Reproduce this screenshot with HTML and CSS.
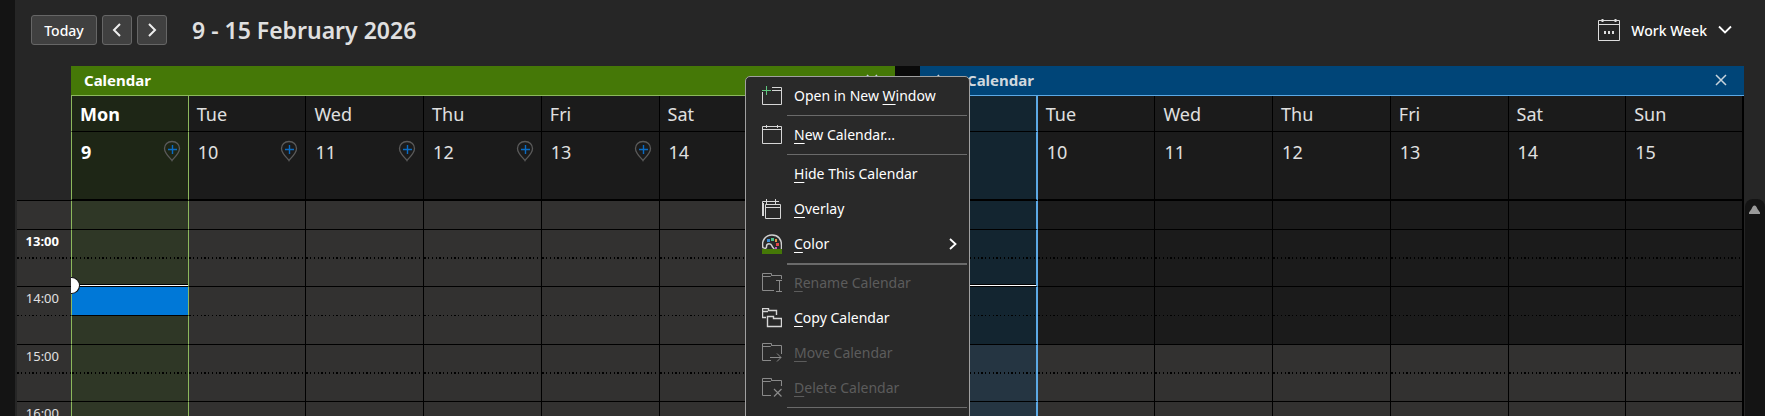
FILE: index.html
```html
<!DOCTYPE html>
<html lang="en">
<head>
  <meta charset="UTF-8">
  <meta name="viewport" content="width=device-width, initial-scale=1.0">
  <title>Calendar</title>
  <link rel="stylesheet" href="styles.css">
</head>
<body>
  <svg class="defs" aria-hidden="true">
    <symbol id="pin" viewBox="0 0 18 22">
      <path d="M9 20.5 C8 18.5 1.5 14 1.5 8.5 C1.5 4.5 4.5 1.5 9 1.5 S16.5 4.5 16.5 8.5 C16.5 14 10 18.5 9 20.5 Z" fill="none" stroke="#5a5a5a" stroke-width="1.3"/>
      <path d="M9.5 5 V14 M5 9.5 H14" fill="none" stroke="#0a6cc4" stroke-width="1.4"/>
    </symbol>
    <symbol id="folder" viewBox="0 0 20 20">
      <path d="M19.5 6 V2.5 H9.5 V0.5 H0.5 V17.5 H9 M0.5 3.5 H8.5 L9.5 2.5" fill="none" stroke="currentColor"/>
    </symbol>
  </svg>

  <div class="app">
    <header class="toolbar">
      <button class="btn btn-today" type="button">Today</button>
      <button class="btn btn-step" type="button" aria-label="Previous week">
        <svg width="10" height="14" viewBox="0 0 10 14"><path d="M8 1 L2 7 L8 13"/></svg>
      </button>
      <button class="btn btn-step" type="button" aria-label="Next week">
        <svg width="10" height="14" viewBox="0 0 10 14"><path d="M2 1 L8 7 L2 13"/></svg>
      </button>
      <h1 class="range">9 - 15 February 2026</h1>
      <button class="view-picker" type="button">
        <svg width="22" height="22" viewBox="0 0 22 22">
          <path d="M0.5 1.5 H21.5 V21.5 H0.5 Z M0.5 5.5 H21.5" fill="none" stroke="#ddd"/>
          <path d="M4.5 0 V3 M17.5 0 V3" stroke="#ddd" stroke-width="2"/>
          <path d="M6 13.5 H8 M10 13.5 H12 M14 13.5 H16" stroke="#ddd" stroke-width="3"/>
        </svg>
        <span>Work Week</span>
        <svg width="14" height="10" viewBox="0 0 14 10"><path d="M1 1.5 L7 7.5 L13 1.5" fill="none" stroke="#fff" stroke-width="1.8"/></svg>
      </button>
    </header>

    <main class="board">
      <table class="hours">
        <thead><tr><th></th></tr></thead>
        <tbody>
          <tr class="slot"><td></td></tr>
          <tr class="slot half"><td class="now-hour">13:00</td></tr>
          <tr class="slot short"><td></td></tr>
          <tr class="slot half thin"><td>14:00</td></tr>
          <tr class="slot"><td></td></tr>
          <tr class="slot half"><td>15:00</td></tr>
          <tr class="slot short"><td></td></tr>
          <tr class="slot half"><td>16:00</td></tr>
        </tbody>
      </table>

      <section class="calendar green">
        <div class="calendar-bar">
          <h2>Calendar</h2>
          <button class="close" type="button" aria-label="Close calendar">
            <svg width="12" height="12" viewBox="0 0 12 12"><path d="M1 1 L11 11 M11 1 L1 11"/></svg>
          </button>
        </div>
        <table class="week">
          <thead>
            <tr class="names"><th class="today">Mon</th><th>Tue</th><th>Wed</th><th>Thu</th><th>Fri</th><th>Sat</th><th></th></tr>
            <tr class="dates">
              <td class="today"><div class="date"><span>9</span><svg class="pin"><use href="#pin"/></svg></div></td>
              <td><div class="date"><span>10</span><svg class="pin"><use href="#pin"/></svg></div></td>
              <td><div class="date"><span>11</span><svg class="pin"><use href="#pin"/></svg></div></td>
              <td><div class="date"><span>12</span><svg class="pin"><use href="#pin"/></svg></div></td>
              <td><div class="date"><span>13</span><svg class="pin"><use href="#pin"/></svg></div></td>
              <td><div class="date"><span>14</span></div></td>
              <td></td>
            </tr>
          </thead>
          <tbody>
            <tr class="slot"><td class="today"></td><td></td><td></td><td></td><td></td><td></td><td></td></tr>
            <tr class="slot half"><td class="today"></td><td></td><td></td><td></td><td></td><td></td><td></td></tr>
            <tr class="slot short"><td class="today"><span class="now-line"></span><span class="now-dot"></span></td><td></td><td></td><td></td><td></td><td></td><td></td></tr>
            <tr class="slot half thin"><td class="today selected"></td><td></td><td></td><td></td><td></td><td></td><td></td></tr>
            <tr class="slot"><td class="today"></td><td></td><td></td><td></td><td></td><td></td><td></td></tr>
            <tr class="slot half"><td class="today"></td><td></td><td></td><td></td><td></td><td></td><td></td></tr>
            <tr class="slot short"><td class="today"></td><td></td><td></td><td></td><td></td><td></td><td></td></tr>
            <tr class="slot half"><td class="today"></td><td></td><td></td><td></td><td></td><td></td><td></td></tr>
          </tbody>
        </table>
      </section>

      <section class="calendar blue">
        <div class="calendar-bar">
          <button class="close" type="button" aria-label="View in overlay mode">
            <svg width="14" height="12" viewBox="0 0 14 12"><path d="M6 1 L1 6 L6 11 M1 6 H13"/></svg>
          </button>
          <h2>Calendar</h2>
          <button class="close" type="button" aria-label="Close calendar">
            <svg width="12" height="12" viewBox="0 0 12 12"><path d="M1 1 L11 11 M11 1 L1 11"/></svg>
          </button>
        </div>
        <table class="week">
          <thead>
            <tr class="names"><th class="today"></th><th>Tue</th><th>Wed</th><th>Thu</th><th>Fri</th><th>Sat</th><th>Sun</th></tr>
            <tr class="dates">
              <td class="today"></td>
              <td><div class="date"><span>10</span></div></td>
              <td><div class="date"><span>11</span></div></td>
              <td><div class="date"><span>12</span></div></td>
              <td><div class="date"><span>13</span></div></td>
              <td><div class="date"><span>14</span></div></td>
              <td><div class="date"><span>15</span></div></td>
            </tr>
          </thead>
          <tbody>
            <tr class="slot off"><td class="today"></td><td></td><td></td><td></td><td></td><td></td><td></td></tr>
            <tr class="slot half off"><td class="today"></td><td></td><td></td><td></td><td></td><td></td><td></td></tr>
            <tr class="slot short off"><td class="today"><span class="now-line"></span></td><td></td><td></td><td></td><td></td><td></td><td></td></tr>
            <tr class="slot half thin off"><td class="today"></td><td></td><td></td><td></td><td></td><td></td><td></td></tr>
            <tr class="slot off"><td class="today"></td><td></td><td></td><td></td><td></td><td></td><td></td></tr>
            <tr class="slot half"><td class="today"></td><td></td><td></td><td></td><td></td><td></td><td></td></tr>
            <tr class="slot short"><td class="today"></td><td></td><td></td><td></td><td></td><td></td><td></td></tr>
            <tr class="slot half"><td class="today"></td><td></td><td></td><td></td><td></td><td></td><td></td></tr>
          </tbody>
        </table>
      </section>

      <div class="scrollbar">
        <button type="button" aria-label="Scroll up">
          <svg width="11" height="10" viewBox="0 0 11 10"><path d="M5.5 0.5 C7 0.5 7.5 2 8.5 4 L11 7.5 V9 H0 V7.5 L2.5 4 C3.5 2 4 0.5 5.5 0.5 Z" fill="#9a9a9a"/></svg>
        </button>
      </div>
    </main>
  </div>

  <!-- Calendar context menu -->
  <div class="menu" role="menu">
    <button type="button" role="menuitem">
      <svg class="icon" viewBox="0 0 20 20">
        <path d="M0.5 6 V18.5 H19.5 V1.5 H10 M10 4.5 H19" fill="none" stroke="currentColor"/>
        <path d="M4.5 0 V9 M0 4.5 H9" fill="none" stroke="#5fc77e"/>
      </svg>
      <span>Open in New <u>W</u>indow</span>
    </button>
    <hr>
    <button type="button" role="menuitem">
      <svg class="icon" viewBox="0 0 20 20">
        <path d="M0.5 1.5 H19.5 V18.5 H0.5 Z M0.5 4.5 H19.5 M4.5 0 V3 M15.5 0 V3" fill="none" stroke="currentColor"/>
      </svg>
      <span><u>N</u>ew Calendar...</span>
    </button>
    <hr>
    <button type="button" role="menuitem"><span class="icon"></span><span><u>H</u>ide This Calendar</span></button>
    <button type="button" role="menuitem">
      <svg class="icon" viewBox="0 0 20 20">
        <path d="M0.5 17 V2.5 H17 M4.5 0 V5 M13.5 0 V5 M3.5 5.5 H18.5 V19.5 H3.5 Z M3.5 8.5 H18.5 M1.5 17 V4" fill="none" stroke="currentColor"/>
      </svg>
      <span><u>O</u>verlay</span>
    </button>
    <button type="button" role="menuitem">
      <svg class="icon" viewBox="0 0 20 20">
        <path d="M1 14 C-1 6 4 1 10 1 S20 5 19.5 13 V15 M1 13.5 C3 15 5 14.5 4.5 12 C5 9 9 9 10 12 C10.5 14 12 14 12 15" fill="none" stroke="#d0d0d0" stroke-width="1.5"/>
        <path d="M5 5 H8 V8 H5 Z" fill="#3a8fd8"/>
        <path d="M9 4 H12 V7 H9 Z" fill="#4cc08a"/>
        <path d="M13 5 H15 V8 H13 Z" fill="#e0954a"/>
        <path d="M14 9 H17 V12 H14 Z" fill="#e04848"/>
        <path d="M13 13 H15 V15 H13 Z" fill="#c05fc0"/>
        <path d="M0 15 H20 V20 H0 Z" fill="#457807"/>
      </svg>
      <span><u>C</u>olor</span>
      <svg class="submenu" width="8" height="12" viewBox="0 0 8 12"><path d="M1 1 L6.5 6 L1 11" fill="none" stroke="#fff" stroke-width="1.8"/></svg>
    </button>
    <hr class="thick">
    <button type="button" role="menuitem" disabled>
      <svg class="icon" viewBox="0 0 20 20">
        <use href="#folder"/>
        <path d="M14 7.5 H20 M17.5 7.5 V18.5 M14 18.5 H20 M9 17.5 H12" fill="none" stroke="currentColor"/>
      </svg>
      <span><u>R</u>ename Calendar</span>
    </button>
    <button type="button" role="menuitem">
      <svg class="icon" viewBox="0 0 20 20">
        <path d="M4 9.5 H0.5 V0.5 H6.5 V2.5 H14.5 V7 M0.5 3.5 H6 M5.5 18.5 V8.5 H11.5 V10.5 H19.5 V18.5 Z" fill="none" stroke="currentColor" stroke-width="1.4"/>
      </svg>
      <span><u>C</u>opy Calendar</span>
    </button>
    <button type="button" role="menuitem" disabled>
      <svg class="icon" viewBox="0 0 20 20">
        <use href="#folder"/>
        <path d="M8 14.5 H19 M15 10.5 L19 14.5 L15 18.5 M19.5 6 V11" fill="none" stroke="currentColor"/>
      </svg>
      <span><u>M</u>ove Calendar</span>
    </button>
    <button type="button" role="menuitem" disabled>
      <svg class="icon" viewBox="0 0 20 20">
        <use href="#folder"/>
        <path d="M12 11 L19.5 18.5 M19.5 11 L12 18.5 M19.5 6 V8" fill="none" stroke="currentColor" stroke-width="1.2"/>
      </svg>
      <span><u>D</u>elete Calendar</span>
    </button>
    <hr>
  </div>
</body>
</html>
```
FILE: styles.css
```css
:root {
  --bg: #262626;
  --edge: #141414;
  --cell: #1b1b1b;
  --work: #323130;
  --line: #000;
}

* {
  box-sizing: border-box;
}

body {
  margin: 0;
  height: 100vh;
  overflow: hidden;
  background: var(--bg);
  color: #e0e0e0;
  font-family: "Noto Sans", "Open Sans", sans-serif;
}

button {
  font: inherit;
  color: inherit;
  background: none;
  border: none;
  padding: 0;
}

.defs {
  display: none;
}

.app {
  height: 100vh;
  border-left: 15px solid var(--edge);
}

/* Toolbar */
.toolbar {
  display: flex;
  align-items: center;
  gap: 5px;
  height: 66px;
  padding: 0 33px 6px 16px;
}

.btn {
  height: 30px;
  background: #404040;
  border: 1px solid #666;
  border-radius: 3px;
  color: #fff;
  display: flex;
  align-items: center;
  justify-content: center;
}

.btn-today {
  width: 66px;
  font-size: 14px;
  font-weight: 500;
}

.btn-step {
  width: 30px;
}

.btn-step path {
  fill: none;
  stroke: #eee;
  stroke-width: 2;
}

.range {
  margin: 0 auto 0 20px;
  font-size: 23px;
  line-height: 30px;
  font-weight: 600;
}

.view-picker {
  display: flex;
  align-items: center;
  gap: 11px;
  font-size: 14px;
  font-weight: 500;
  color: #fff;
}

/* Two calendars side by side */
.board {
  display: grid;
  grid-template-columns: 56px 1fr 25px 1fr 21px;
}

.hours { grid-column: 1; }
.green { grid-column: 2; }
.blue { grid-column: 4; }
.scrollbar { grid-column: 5; }

.green {
  --bar: #457807;
  --accent: #8cb85c;
  --today-head: #1e2616;
  --today-work: #2f3726;
  --today-off: #1e2616;
  --accent-width: 1px;
  box-shadow: 25px 0 0 #0a0a0a;
}

.blue {
  --bar: #004578;
  --accent: #5ca9e5;
  --today-head: #132530;
  --today-work: #253542;
  --today-off: #132530;
  --accent-width: 2px;
}

.calendar-bar {
  display: flex;
  align-items: center;
  gap: 20px;
  height: 30px;
  padding: 0 17px 2px 13px;
  background: var(--bar);
  border-bottom: 1px solid var(--accent);
}

.calendar-bar h2 {
  margin: 0 auto 0 0;
  font-size: 15px;
  line-height: 20px;
  font-weight: 700;
  color: #fff;
}

.blue .calendar-bar h2 {
  color: #d0d8de;
}

.close {
  display: flex;
}

.close path {
  fill: none;
  stroke: #c8d4dc;
  stroke-width: 1.5;
}

table {
  width: 100%;
  table-layout: fixed;
  border-collapse: separate;
  border-spacing: 0;
}

th,
td {
  padding: 0;
  text-align: left;
  font-weight: 400;
}

.week th,
.week td {
  background-color: var(--cell);
  border-right: 1px solid var(--line);
  border-bottom: 1px solid var(--line);
}

.names th {
  height: 36px;
  padding-left: 8px;
  font-size: 18px;
  line-height: 24px;
}

.names .today {
  width: calc(100% / 7 + 1px);
}

.week .dates td {
  height: 69px;
  padding: 8px 7px 0 9px;
  vertical-align: top;
  border-bottom-width: 2px;
  font-size: 18px;
  line-height: 24px;
}

.date {
  display: flex;
  justify-content: space-between;
}

.pin {
  width: 18px;
  height: 22px;
}

.names .today,
.dates .today {
  font-weight: 700;
  color: #fff;
}

.week .today {
  position: relative;
  background-color: var(--today-head);
  border-left: 1px solid var(--accent);
  border-right: var(--accent-width) solid var(--accent);
}

.week tr > :last-child {
  border-right-width: 2px;
}

/* Half-hour slots */
.slot td {
  height: 29px;
  border-bottom: 1px solid var(--line);
  background-color: var(--work);
}

.week .slot td {
  background-color: var(--work);
}

.week .slot .today {
  background-color: var(--today-work);
}

.week .off td {
  background-color: var(--cell);
}

.week .off .today {
  background-color: var(--today-off);
}

.slot.short td {
  height: 28px;
}

.slot.half td,
.week .slot.half td {
  border-bottom: none;
  background-image: repeating-linear-gradient(90deg, #000 0 2px, transparent 2px 4px, #000 4px 5px, transparent 5px 8px, #000 8px 9px, transparent 9px 12px, #000 12px 13px, transparent 13px 15px);
  background-size: 100% 2px;
  background-position: 0 100%;
  background-repeat: no-repeat;
}

.slot.half.thin td,
.week .slot.half.thin td {
  background-size: 100% 1px;
}

.week .slot.half .selected {
  background-color: #0078d7;
  background-image: none;
  border-bottom: 1px solid var(--line);
}

/* Current time */
.now-line {
  position: absolute;
  left: 0;
  right: 0;
  bottom: -1px;
  z-index: 1;
  height: 3px;
  background: #fff;
  border: solid #000;
  border-width: 1px 0;
}

.now-dot {
  position: absolute;
  left: -1px;
  bottom: -8px;
  z-index: 1;
  width: 9px;
  height: 17px;
  background: #fff;
  border: 1px solid #111;
  border-left: none;
  border-radius: 0 9px 9px 0;
}

/* Hour labels */
.hours {
  align-self: start;
  padding-left: 2px;
}

.hours th {
  height: 135px;
  border-bottom: 1px solid var(--line);
}

.hours td {
  padding: 0 12px 8px 0;
  text-align: right;
  font-size: 13px;
  line-height: 18px;
}

.hours .now-hour {
  font-weight: 700;
  color: #fff;
}

.scrollbar {
  margin: 133px 0 0 1px;
  padding: 6px 4px 0;
  background: var(--edge);
  border-radius: 8px 8px 0 0;
}

.scrollbar button,
.scrollbar svg {
  display: block;
}

/* Context menu */
.menu {
  position: absolute;
  top: 76px;
  left: 745px;
  z-index: 2;
  width: 225px;
  padding: 2px 2px 12px;
  background: #292929;
  border: 1px solid #a0a0a0;
  border-radius: 5px;
}

.menu button {
  display: flex;
  align-items: center;
  gap: 12px;
  width: 100%;
  height: 35px;
  padding: 0 10px 2px 14px;
  font-size: 14px;
  color: #fff;
  text-align: left;
}

.menu button:disabled {
  color: #5c5c5c;
}

.menu u {
  text-underline-offset: 3px;
}

.icon {
  width: 20px;
  height: 20px;
  color: #d6d6d6;
}

button:disabled .icon {
  color: #8a8a8a;
}

.submenu {
  margin-left: auto;
}

.menu hr {
  height: 1px;
  margin: 1px 0 2px 39px;
  border: none;
  background: #6a6a6a;
}

.menu hr.thick {
  height: 2px;
  margin: 1px 0 1px 39px;
}
```
